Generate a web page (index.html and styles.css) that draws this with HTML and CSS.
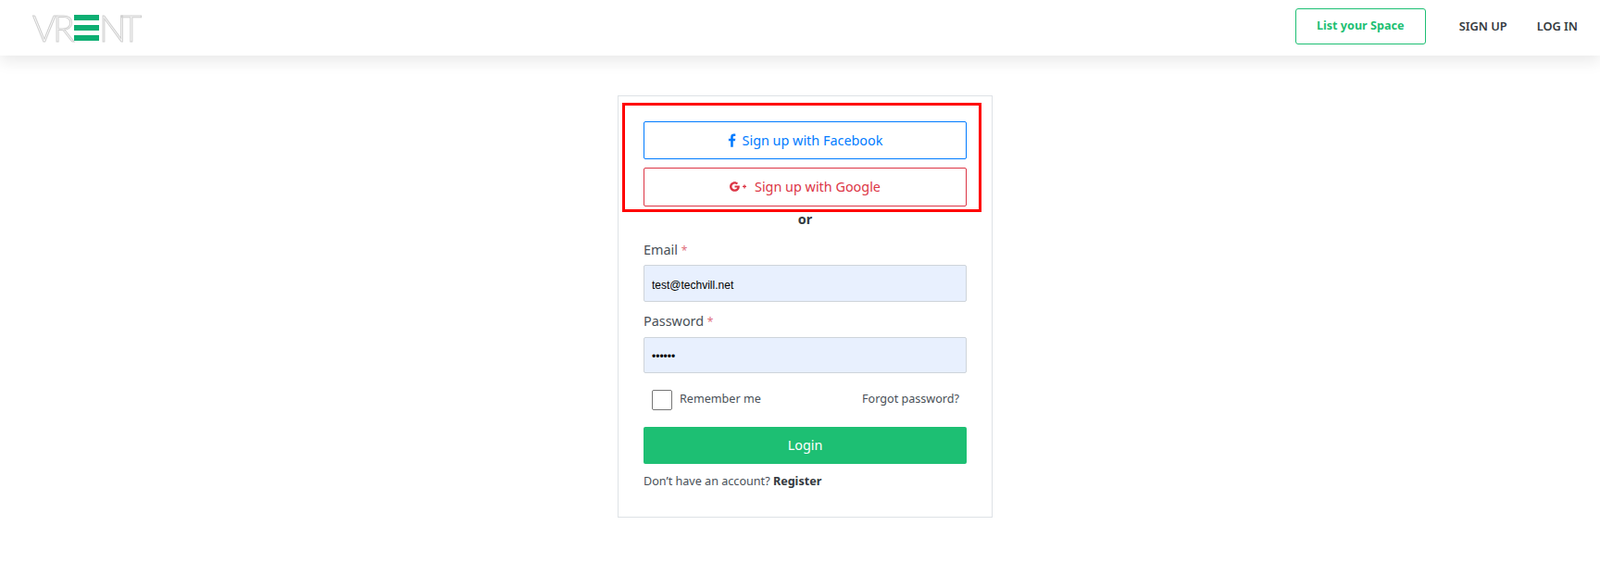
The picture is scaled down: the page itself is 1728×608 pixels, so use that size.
FILE: index.html
```html
<!DOCTYPE html>
<html lang="en">
<head>
<meta charset="utf-8">
<title>Vrent - Log in</title>
<link rel="stylesheet" href="styles.css">
</head>
<body>
<header class="topbar">
  <a class="logo" href="#"><span class="logo-text">VR</span><span class="logo-bars"><i></i><i></i><i></i></span><span class="logo-text logo-end">NT</span></a>
  <nav class="nav">
    <a class="list-space" href="#">List your Space</a>
    <a class="nav-link" href="#">SIGN UP</a>
    <a class="nav-link" href="#">LOG IN</a>
  </nav>
</header>
<main class="main">
  <form class="card">
    <div class="highlight"></div>
    <a class="social fb" href="#">
      <svg class="fb-icon" viewBox="0 0 10 16" width="9" height="15"><path fill="currentColor" d="M6.4 16V8.9h2.4l.4-2.8H6.4V4.400c0-.8.3-1.400 1.400-1.400h1.400V.5C9 .4 8.100.3 7.200.3 5 .3 3.500 1.600 3.500 4v2.100H1v2.800h2.500V16z"/></svg>
      <span>Sign up with Facebook</span>
    </a>
    <a class="social gp" href="#">
      <svg class="gp-icon" viewBox="0 0 18 11" width="18" height="11"><path fill="currentColor" d="M5.500 4.400v2.200h2.800C8.100 7.700 7.100 8.500 5.500 8.500 3.800 8.500 2.500 7.100 2.500 5.500S3.800 2.500 5.500 2.500c.9 0 1.600.3 2.100.8l1.600-1.600C8.200.8 6.900.2 5.500.2 2.500.2 0 2.500 0 5.500s2.500 5.300 5.500 5.300c3.100 0 5.300-2.200 5.300-5.300 0-.4 0-.7-.1-1.100z"/><path fill="currentColor" d="M16.700 3.400h-1.300v1.400H14V6h1.400v1.400h1.300V6H18V4.800h-1.300z"/></svg>
      <span>Sign up with Google</span>
    </a>
    <p class="or">or</p>
    <label class="field-label">Email <em>*</em></label>
    <input class="field email" type="text" value="test@techvill.net">
    <label class="field-label pass-label">Password <em>*</em></label>
    <input class="field pass" type="password" value="123456">
    <div class="options">
      <label class="remember"><span class="box"></span><span class="remember-text">Remember me</span></label>
      <a class="forgot" href="#">Forgot password?</a>
    </div>
    <button class="login" type="button">Login</button>
    <p class="register">Don’t have an account? <a href="#">Register</a></p>
  </form>
</main>
</body>
</html>
```
FILE: styles.css
```css
* { box-sizing: border-box; }
html, body { margin: 0; height: 100%; background: #fff; overflow: hidden; }
body { font-family: "Noto Sans", "Open Sans", sans-serif; color: #343a40; }
a { text-decoration: none; color: inherit; }

.topbar {
  height: 60px;
  display: flex;
  align-items: center;
  justify-content: space-between;
  padding: 0 24px 0 35px;
  background: #fff;
  box-shadow: 0 6px 16px rgba(0, 0, 0, .09);
}
.logo { display: flex; align-items: center; height: 28px; margin-top: -1px; filter: blur(.35px); }
.logo-text {
  width: 45px;
  font-family: "Lato", sans-serif;
  font-size: 39px;
  font-weight: 300;
  line-height: 28px;
  letter-spacing: -3.5px;
  color: #fff;
  -webkit-text-stroke: 1px #cfcfcf;
  white-space: nowrap;
}
.logo-end { letter-spacing: -6px; }
.logo-bars { display: flex; flex-direction: column; justify-content: space-between; width: 27px; height: 28px; }
.logo-bars i { display: block; height: 6px; background: #0cae72; }

.nav { display: flex; align-items: center; margin-top: -4px; }
.list-space {
  width: 141px;
  height: 39px;
  display: flex;
  align-items: center;
  justify-content: center;
  padding-bottom: 2px;
  border: 1px solid #1dbf73;
  border-radius: 3px;
  color: #1dbf73;
  font-size: 12.6px;
  font-weight: 700;
}
.nav-link { font-size: 12.8px; font-weight: 600; color: #343a40; margin-left: 36px; }
.nav-link:last-child { margin-left: 32px; }

.main { display: flex; justify-content: center; padding: 43px 0 0 11px; }
.card {
  position: relative;
  width: 405px;
  height: 456px;
  padding: 27px 27px 0;
  border: 1px solid #dee2e6;
}
.highlight {
  position: absolute;
  left: 4px;
  top: 7px;
  width: 388px;
  height: 118px;
  border: 3px solid #f00;
}
.social {
  display: flex;
  align-items: center;
  justify-content: center;
  height: 41px;
  border: 1px solid;
  border-radius: 2px;
  font-size: 14.4px;
}
.fb { color: #007bff; }
.gp { color: #dc3545; height: 42px; margin-top: 9px; padding-bottom: 1px; }
.fb-icon { margin-right: 7px; }
.gp-icon { margin-right: 9px; }
.or { margin: 4px 0 0; height: 19px; line-height: 19px; text-align: center; font-size: 14.4px; font-weight: 700; color: #343a40; }
.field-label { display: block; margin-top: 14px; height: 20px; line-height: 20px; font-size: 14.4px; color: #495057; }
.field-label em { font-style: normal; color: #e0707c; font-size: 12px; }
.pass-label { margin-top: 11px; }
.field {
  display: block;
  width: 100%;
  height: 40px;
  margin-top: 6px;
  padding: 3px 8px 0;
  border: 1px solid #ced4da;
  border-radius: 2px;
  background: #e8f0fe;
  color: #000;
  font-family: "Liberation Sans", Arial, sans-serif;
  font-size: 12px;
  outline: none;
}
.pass { height: 39px; margin-top: 7px; font-size: 12px; }
.options {
  display: flex;
  align-items: center;
  justify-content: space-between;
  height: 22px;
  margin-top: 18px;
  padding: 0 8px 0 9px;
  font-size: 12.6px;
  color: #495057;
}
.remember { display: flex; align-items: center; }
.box { width: 22px; height: 22px; margin-right: 8px; border: 1px solid #767676; border-radius: 2px; background: #fff; }
.remember-text, .forgot { margin-bottom: 3px; }
.login {
  display: block;
  width: 100%;
  height: 40px;
  margin-top: 18px;
  padding-bottom: 2px;
  border: 0;
  border-radius: 2px;
  background: #1dbf73;
  color: #fff;
  font-family: inherit;
  font-size: 14.4px;
  font-weight: 400;
}
.register { margin: 10px 0 0; height: 18px; line-height: 18px; font-size: 12.6px; color: #495057; }
.register a { font-weight: 700; color: #343a40; }
```
